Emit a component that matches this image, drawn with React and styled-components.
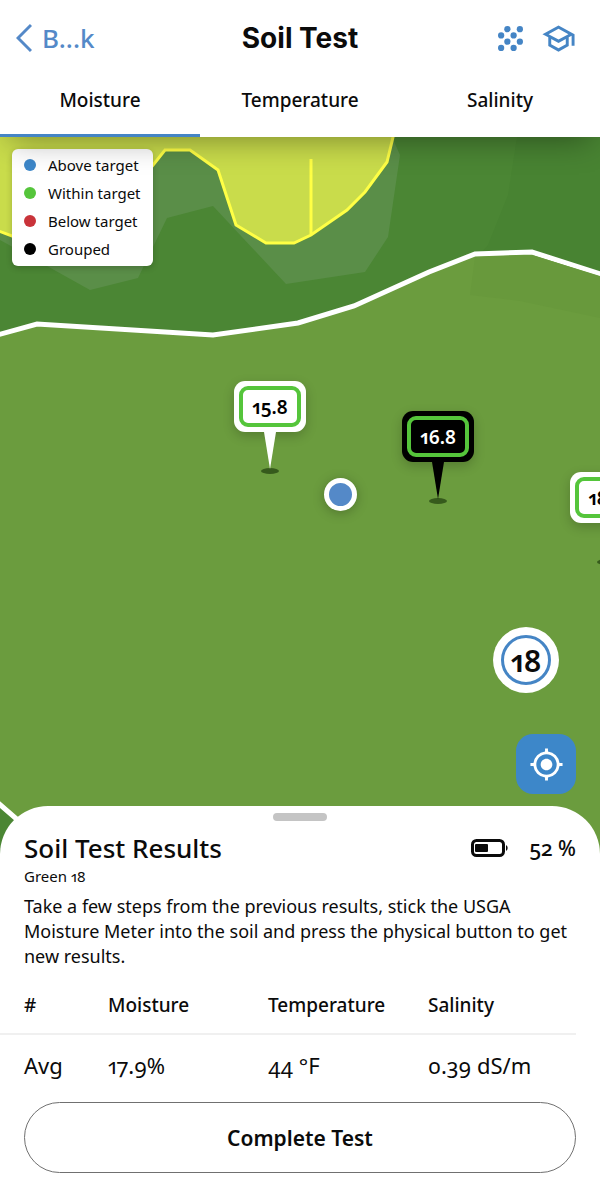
import React, { useState } from 'react';
import styled, { createGlobalStyle } from 'styled-components';
import { MdMyLocation, MdOutlineSchool } from 'react-icons/md';

const GlobalStyle = createGlobalStyle`
  * {
    box-sizing: border-box;
  }

  body {
    margin: 0;
    background: #ffffff;
    color: #0b0b0b;
    font-family: 'Noto Sans', 'Open Sans', sans-serif;
    font-feature-settings: 'onum' 1, 'pnum' 1;
  }

  button {
    font: inherit;
    font-feature-settings: inherit;
    color: inherit;
    border: none;
    background: none;
    padding: 0;
    cursor: pointer;
  }
`;

const Screen = styled.div`
  min-height: 100vh;
  display: flex;
  flex-direction: column;
  overflow: hidden;
`;

const Header = styled.header`
  position: relative;
  z-index: 2;
  background: #ffffff;
  box-shadow: 0 12px 30px -10px rgba(0, 0, 0, 0.4);
`;

const TopBar = styled.div`
  display: grid;
  grid-template-columns: 1fr auto 1fr;
  align-items: center;
  height: 76px;
  padding: 0 24px 0 16px;
`;

const BackButton = styled.button`
  display: flex;
  align-items: center;
  gap: 10px;
  justify-self: start;
  color: #5489c8;
  font-size: 26px;
  font-weight: 500;
`;

const Title = styled.h1`
  margin: 0 0 0 8px;
  font-family: Inter, sans-serif;
  font-size: 28px;
  font-weight: 700;
`;

const Actions = styled.div`
  display: flex;
  align-items: center;
  justify-self: end;
  gap: 18px;
`;

const IconButton = styled.button`
  display: flex;
  color: #4585c5;
`;

const Tabs = styled.nav`
  display: grid;
  grid-template-columns: repeat(3, 1fr);
`;

const Tab = styled.button`
  height: 61px;
  padding-bottom: 10px;
  border-bottom: 3px solid ${({ $active }) => ($active ? '#4585c5' : 'transparent')};
  font-size: 19px;
  font-weight: 500;
`;

const MapArea = styled.main`
  position: relative;
  flex: 1;
  min-height: 500px;
  overflow: hidden;
  background: #6b9c3e;
`;

const MapDrawing = styled.svg`
  position: absolute;
  inset: 0;
  width: 100%;
  height: 100%;
`;

const Legend = styled.ul`
  position: absolute;
  top: 12px;
  left: 12px;
  margin: 0;
  padding: 2px 12px 3px;
  list-style: none;
  border-radius: 6px;
  background: #ffffff;
  box-shadow: 0 2px 6px rgba(0, 0, 0, 0.2);
`;

const LegendItem = styled.li`
  display: flex;
  align-items: center;
  gap: 12px;
  height: 28px;
  font-size: 15px;

  &::before {
    content: '';
    width: 12px;
    height: 12px;
    border-radius: 50%;
    background: ${({ $color }) => $color};
  }
`;

const PinWrap = styled.div`
  position: absolute;
  top: ${({ $top }) => $top}px;
  left: ${({ $left }) => $left}%;
  display: flex;
  flex-direction: column;
  align-items: center;
  transform: translateX(-50%);
`;

const PinLabel = styled.div`
  width: 72px;
  height: 51px;
  padding: 5px;
  border-radius: 11px;
  background: ${({ $dark }) => ($dark ? '#000000' : '#ffffff')};
  color: ${({ $dark }) => ($dark ? '#ffffff' : '#000000')};
  box-shadow: 0 4px 12px rgba(0, 0, 0, 0.2);
`;

const PinValue = styled.div`
  display: flex;
  align-items: center;
  justify-content: center;
  height: 100%;
  border: 4px solid #55c53b;
  border-radius: 9px;
  font-size: 19px;
  font-weight: 600;
`;

const Position = styled.div`
  position: absolute;
  top: 341px;
  left: 54%;
  width: 33px;
  height: 33px;
  border: 5px solid #ffffff;
  border-radius: 50%;
  background: #5489c8;
  box-shadow: 0 2px 12px rgba(0, 0, 0, 0.25);
`;

const MapControls = styled.div`
  position: absolute;
  right: 24px;
  bottom: 60px;
  display: flex;
  flex-direction: column;
  align-items: flex-end;
  gap: 41px;
`;

const HoleBadge = styled.div`
  width: 66px;
  height: 66px;
  margin-right: 17px;
  padding: 8px;
  border-radius: 50%;
  background: #ffffff;
`;

const HoleNumber = styled.div`
  display: flex;
  align-items: center;
  justify-content: center;
  height: 100%;
  border: 3px solid #4585c5;
  border-radius: 50%;
  font-size: 30px;
  font-weight: 600;
`;

const LocateButton = styled.button`
  display: flex;
  align-items: center;
  justify-content: center;
  width: 60px;
  height: 60px;
  border-radius: 17px;
  background: #3d87c9;
  color: #ffffff;
`;

const Sheet = styled.section`
  position: relative;
  z-index: 1;
  margin-top: -48px;
  padding: 7px 24px 27px;
  border-radius: 48px 48px 0 0;
  background: #ffffff;
`;

const Handle = styled.div`
  width: 54px;
  height: 8px;
  margin: 0 auto 8px;
  border-radius: 4px;
  background: #c4c4c4;
`;

const SheetHeader = styled.div`
  display: flex;
  align-items: center;
  justify-content: space-between;
  height: 37px;
`;

const SheetTitle = styled.h2`
  margin: 0;
  font-size: 26px;
  font-weight: 500;
`;

const Battery = styled.div`
  display: flex;
  align-items: center;
  gap: 20px;
  font-size: 21px;
  font-weight: 500;
`;

const Location = styled.p`
  margin: 0 0 8px;
  font-size: 15px;
  line-height: 20px;
`;

const Instructions = styled.p`
  margin: 0;
  font-size: 18px;
  line-height: 25px;
`;

const Results = styled.table`
  width: calc(100% + 24px);
  margin-left: -24px;
  border-collapse: collapse;
  table-layout: fixed;
  text-align: left;
`;

const HeadCell = styled.th`
  width: ${({ $width }) => $width || 'auto'};
  height: 65px;
  padding: 8px 0 0;
  border-bottom: 2px solid #f0f0f0;
  font-size: 19px;
  font-weight: 500;

  &:first-child {
    padding-left: 24px;
  }
`;

const Cell = styled.td`
  height: 62px;
  padding: 0 0 2px;
  font-size: 22px;

  &:first-child {
    padding-left: 24px;
  }
`;

const CompleteButton = styled.button`
  width: 100%;
  height: 71px;
  margin-top: 6px;
  border: 1px solid #707070;
  border-radius: 36px;
  font-size: 21px;
  font-weight: 600;
`;

const legend = [
  { label: 'Above target', color: '#3d87c9' },
  { label: 'Within target', color: '#55c53b' },
  { label: 'Below target', color: '#c9333a' },
  { label: 'Grouped', color: '#000000' },
];

const pins = [
  { value: '15.8', top: 244, left: 45 },
  { value: '16.8', top: 274, left: 73, dark: true },
  { value: '18.2', top: 335, left: 101 },
];

const columns = [
  { label: '#', width: '108px' },
  { label: 'Moisture', width: '160px' },
  { label: 'Temperature', width: '160px' },
  { label: 'Salinity' },
];

const rows = [['Avg', '17.9%', '44 °F', '0.39 dS/m']];

function ChevronIcon() {
  return (
    <svg width="16" height="30" viewBox="0 0 16 30" fill="none" stroke="currentColor" strokeWidth="3" aria-hidden="true">
      <path d="M15 2 2 15l13 13" />
    </svg>
  );
}

function DotsIcon() {
  const dots = [[9, 3], [21, 3], [3, 9], [15, 9], [9, 15], [21, 15], [3, 21], [15, 21]];
  return (
    <svg width="25" height="25" viewBox="0 0 24 24" fill="currentColor" aria-hidden="true">
      {dots.map(([x, y]) => (
        <circle key={`${x}-${y}`} cx={x} cy={y} r="3" />
      ))}
    </svg>
  );
}

function BatteryIcon() {
  return (
    <svg width="38" height="18" viewBox="0 0 38 18" aria-hidden="true">
      <rect x="1.500" y="1.500" width="31" height="15" rx="4" fill="none" stroke="currentColor" strokeWidth="3" />
      <rect x="4" y="5" width="13" height="8" rx="1" fill="currentColor" />
      <path d="M35 6a3.500 3.500 0 0 1 0 6z" fill="currentColor" />
    </svg>
  );
}

function CourseMap() {
  return (
    <MapDrawing viewBox="0 137 600 717" preserveAspectRatio="xMidYMin slice" aria-hidden="true">
      <rect y="137" width="600" height="717" fill="#4b8634" />
      <path d="M517 137 508 195 488 245 475 260 600 280V137z" fill="#488332" />
      <path d="M0 240 47 266 90 290 138 278 167 218 213 206 286 284 365 272 388 237 400 155 392 137H0z" fill="#5a8e48" />
      <path
        d="M-4 230 12 236 60 236 130 194 165 150H190L218 170 236 225 266 243H294L311 235 347 210 365 192 387 162 394 133H-4z"
        fill="#c9dc4b"
        stroke="#ffff45"
        strokeWidth="3"
      />
      <path d="M311 159V234" stroke="#ffff45" strokeWidth="3" />
      <path
        d="M-10 337 37 324 213 335 298 323 354 306 429 272 475 254 532 252 610 277V900H110L-10 796z"
        fill="#6b9c3e"
        stroke="#ffffff"
        strokeWidth="5"
      />
      <path d="M475 257 532 255 600 276V318L520 301 470 295z" fill="#68993c" />
    </MapDrawing>
  );
}

function Pin({ value, top, left, dark }) {
  return (
    <PinWrap $top={top} $left={left}>
      <PinLabel $dark={dark}>
        <PinValue>{value}</PinValue>
      </PinLabel>
      <svg width="20" height="42" viewBox="0 0 20 42" aria-hidden="true">
        <ellipse cx="10" cy="39" rx="9" ry="3" fill="#365a1c" />
        <path d="M4 0H16L10 37z" fill={dark ? '#000000' : '#ffffff'} />
      </svg>
    </PinWrap>
  );
}

function App() {
  const [activeTab, setActiveTab] = useState('Moisture');

  return (
    <>
      <GlobalStyle />
      <Screen>
        <Header>
          <TopBar>
            <BackButton type="button">
              <ChevronIcon />
              B...k
            </BackButton>
            <Title>Soil Test</Title>
            <Actions>
              <IconButton type="button" aria-label="Sampling grid">
                <DotsIcon />
              </IconButton>
              <IconButton type="button" aria-label="Learn">
                <MdOutlineSchool size={35} />
              </IconButton>
            </Actions>
          </TopBar>
          <Tabs>
            {['Moisture', 'Temperature', 'Salinity'].map((tab) => (
              <Tab key={tab} type="button" $active={tab === activeTab} onClick={() => setActiveTab(tab)}>
                {tab}
              </Tab>
            ))}
          </Tabs>
        </Header>

        <MapArea>
          <CourseMap />
          <Legend>
            {legend.map(({ label, color }) => (
              <LegendItem key={label} $color={color}>
                {label}
              </LegendItem>
            ))}
          </Legend>
          {pins.map((pin) => (
            <Pin key={pin.value} {...pin} />
          ))}
          <Position />
          <MapControls>
            <HoleBadge>
              <HoleNumber>18</HoleNumber>
            </HoleBadge>
            <LocateButton type="button" aria-label="Center on my location">
              <MdMyLocation size={35} />
            </LocateButton>
          </MapControls>
        </MapArea>

        <Sheet>
          <Handle />
          <SheetHeader>
            <SheetTitle>Soil Test Results</SheetTitle>
            <Battery>
              <BatteryIcon />
              52 %
            </Battery>
          </SheetHeader>
          <Location>Green 18</Location>
          <Instructions>
            Take a few steps from the previous results, stick the USGA Moisture Meter into the soil and press the
            physical button to get new results.
          </Instructions>
          <Results>
            <thead>
              <tr>
                {columns.map(({ label, width }) => (
                  <HeadCell key={label} $width={width} scope="col">
                    {label}
                  </HeadCell>
                ))}
              </tr>
            </thead>
            <tbody>
              {rows.map((row) => (
                <tr key={row[0]}>
                  {row.map((value) => (
                    <Cell key={value}>{value}</Cell>
                  ))}
                </tr>
              ))}
            </tbody>
          </Results>
          <CompleteButton type="button">Complete Test</CompleteButton>
        </Sheet>
      </Screen>
    </>
  );
}

export default App;
